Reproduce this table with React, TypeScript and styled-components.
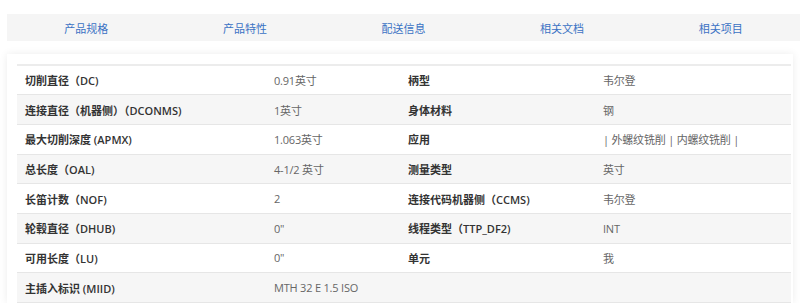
import styled, { createGlobalStyle } from 'styled-components'

const GlobalStyle = createGlobalStyle`
  html, body {
    margin: 0;
    padding: 0;
    background: #fff;
    overflow: hidden;
  }
  body {
    font-family: "Open Sans", "Noto Sans CJK SC", sans-serif;
  }
`

const Page = styled.div`
  width: 800px;
  padding-top: 14px;
`

const TabBar = styled.nav`
  display: flex;
  margin-left: 7px;
  width: 793px;
  height: 27px;
  background: #f5f5f5;
`

const Tab = styled.a`
  flex: 1;
  display: flex;
  align-items: center;
  justify-content: center;
  font-size: 11px;
  color: #3a72c4;
  text-decoration: none;
  cursor: pointer;
`

const Card = styled.section`
  margin: 13px 0 0 7px;
  width: 786px;
  padding: 10px 2px 0 10px;
  box-sizing: border-box;
  background: #fff;
  box-shadow: 0 0 8px rgba(0, 0, 0, 0.08);
`

const Table = styled.table`
  width: 774px;
  border-collapse: collapse;
  table-layout: fixed;
  border-top: 2px solid #ececec;
`

const Row = styled.tr<{ shaded: boolean }>`
  background: ${({ shaded }) => (shaded ? '#f6f6f6' : '#fff')};
  border-bottom: 1px solid #e6e6e6;
`

const Cell = styled.td<{ label?: boolean }>`
  height: 29.7px;
  padding: 0 0 0 8px;
  box-sizing: border-box;
  font-size: 11px;
  white-space: nowrap;
  color: ${({ label }) => (label ? '#333' : '#666')};
  font-weight: ${({ label }) => (label ? 600 : 400)};
  letter-spacing: ${({ label }) => (label ? '0' : '-0.2px')};
`

const tabs = ['产品规格', '产品特性', '配送信息', '相关文档', '相关项目']

const rows: [string, string, string, string][] = [
  ['切削直径（DC)', '0.91英寸', '柄型', '韦尔登'],
  ['连接直径（机器侧）（DCONMS)', '1英寸', '身体材料', '钢'],
  ['最大切削深度 (APMX)', '1.063英寸', '应用', '| 外螺纹铣削 | 内螺纹铣削 |'],
  ['总长度（OAL)', '4-1/2 英寸', '测量类型', '英寸'],
  ['长笛计数（NOF)', '2', '连接代码机器侧（CCMS)', '韦尔登'],
  ['轮毂直径（DHUB)', '0"', '线程类型（TTP_DF2)', 'INT'],
  ['可用长度（LU)', '0"', '单元', '我'],
  ['主插入标识 (MIID)', 'MTH 32 E 1.5 ISO', '', ''],
]

export default function App() {
  return (
    <Page>
      <GlobalStyle />
      <TabBar>
        {tabs.map((t) => (
          <Tab key={t}>{t}</Tab>
        ))}
      </TabBar>
      <Card>
        <Table>
          <colgroup>
            <col style={{ width: 249 }} />
            <col style={{ width: 134 }} />
            <col style={{ width: 195 }} />
            <col style={{ width: 196 }} />
          </colgroup>
          <tbody>
            {rows.map((r, i) => (
              <Row key={i} shaded={i % 2 === 1}>
                <Cell label>{r[0]}</Cell>
                <Cell>{r[1]}</Cell>
                <Cell label>{r[2]}</Cell>
                <Cell>{r[3]}</Cell>
              </Row>
            ))}
          </tbody>
        </Table>
      </Card>
    </Page>
  )
}
